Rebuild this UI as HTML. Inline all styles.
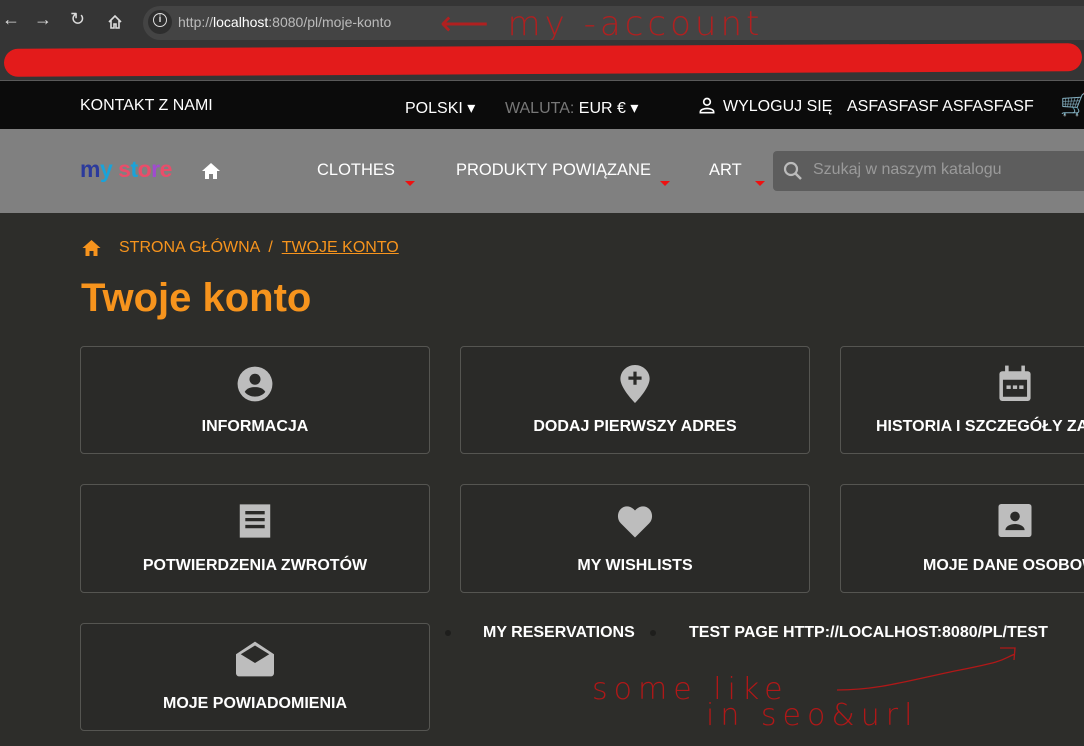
<!DOCTYPE html>
<html><head><meta charset="utf-8"><style>
*{margin:0;padding:0;box-sizing:border-box}
html,body{width:1084px;height:746px;overflow:hidden}
body{background:#2d2d2a;font-family:"Liberation Sans",sans-serif;position:relative}
.wrap{position:absolute;left:0;top:0;width:1084px;height:746px;overflow:hidden}
.abs{position:absolute}
.t{position:absolute;white-space:nowrap}
.card{position:absolute;width:350px;border:1px solid #555551;border-radius:4px;background:#2a2a28}
.card .lbl{position:absolute;left:0;right:0;text-align:center;color:#fff;font-weight:bold;font-size:16px;white-space:nowrap}
.card svg{position:absolute;left:50%;transform:translateX(-50%)}
.nav{color:#fff;font-size:16.5px}
.caret{position:absolute;width:0;height:0;border-left:5px solid transparent;border-right:5px solid transparent;border-top:5px solid #e11}
</style></head><body><div class="wrap">
<div class="abs" style="left:0;top:0;width:1084px;height:40px;background:#353535"></div>
<div class="abs" style="left:143px;top:6px;width:941px;height:34px;background:#444;border-radius:17px 0 0 17px"></div>
<div class="abs" style="left:148px;top:10px;width:24px;height:24px;border-radius:12px;background:#2e2e2e"></div>
<div class="t" style="left:153px;top:13px;width:14px;height:14px;border:1.5px solid #ddd;border-radius:7px;color:#ddd;font-size:10px;text-align:center;line-height:11px;font-weight:bold">i</div>
<div class="t" style="left:178px;top:14px;color:#bbb;font-size:14px">http://<span style="color:#fff">localhost</span>:8080/pl/moje-konto</div>
<div class="t" style="left:2px;top:9px;color:#ddd;font-size:18px">←</div>
<div class="t" style="left:34px;top:9px;color:#ddd;font-size:18px">→</div>
<div class="t" style="left:70px;top:9px;color:#ddd;font-size:18px">↻</div>
<svg class="abs" style="left:107px;top:14px" width="16" height="16" viewBox="0 0 16 16"><path d="M2 8L8 2l6 6M4 6v8h3v-4h2v4h3V6" fill="none" stroke="#ddd" stroke-width="1.6"/></svg>
<div class="t" style="left:440px;top:4px;color:#b02020;font-size:34px;font-family:'DejaVu Sans';font-weight:100;letter-spacing:4px">⟵ my -account</div>
<div class="abs" style="left:0;top:40px;width:1084px;height:40px;background:#353535"></div>
<div class="abs" style="left:4px;top:46px;width:1078px;height:28px;background:#e31b1b;border-radius:14px;transform:rotate(-0.3deg)"></div>
<div class="abs" style="left:0;top:80px;width:1084px;height:1px;background:#5a5a5a"></div>
<div class="abs" style="left:0;top:81px;width:1084px;height:48px;background:#0b0b0b"></div>
<div class="t nav" style="left:80px;top:97px;font-size:16px">KONTAKT Z NAMI</div>
<div class="t nav" style="left:405px;top:98px;font-size:16px">POLSKI ▾</div>
<div class="t" style="left:505px;top:98px;font-size:16px;color:#777">WALUTA: <span style="color:#fff">EUR € ▾</span></div>
<svg class="abs" style="left:697px;top:96px" width="20" height="20" viewBox="0 0 24 24"><circle cx="12" cy="7" r="4" fill="none" stroke="#fff" stroke-width="2"/><path d="M4 20v-1c0-3 5-4 8-4s8 1 8 4v1z" fill="none" stroke="#fff" stroke-width="2"/></svg>
<div class="t nav" style="left:723px;top:98px;font-size:16px">WYLOGUJ SIĘ</div>
<div class="t nav" style="left:847px;top:98px;font-size:16px">ASFASFASF ASFASFASF</div>
<div class="t" style="left:1060px;top:92px;color:#ccc;font-size:22px">🛒</div>
<div class="abs" style="left:0;top:129px;width:1084px;height:84px;background:#808080"></div>
<div class="t" style="left:80px;top:156px;font-size:23px;font-weight:bold;letter-spacing:-0.5px"><span style="color:#2b3a9c">m</span><span style="color:#1aa3d9">y</span> <span style="color:#e94d6a">s</span><span style="color:#1aa3d9">t</span><span style="color:#e94d6a">o</span><span style="color:#a04bd0">r</span><span style="color:#e94d6a">e</span></div>
<svg class="abs" style="left:201px;top:162px" width="20" height="18" viewBox="0 0 20 18"><path d="M10 1L1 9h3v8h4v-5h4v5h4V9h3z" fill="#fff"/></svg>
<div class="t nav" style="left:317px;top:161px">CLOTHES</div><div class="caret" style="left:405px;top:181px"></div>
<div class="t nav" style="left:456px;top:161px">PRODUKTY POWIĄZANE</div><div class="caret" style="left:660px;top:181px"></div>
<div class="t nav" style="left:709px;top:161px">ART</div><div class="caret" style="left:755px;top:181px"></div>
<div class="abs" style="left:773px;top:151px;width:311px;height:40px;background:#5d5d5d;border-radius:4px 0 0 4px"></div>
<svg class="abs" style="left:783px;top:161px" width="20" height="20" viewBox="0 0 20 20"><circle cx="8" cy="8" r="6" fill="none" stroke="#bbb" stroke-width="2.2"/><path d="M12.5 12.5L18 18" stroke="#bbb" stroke-width="2.5"/></svg>
<div class="t" style="left:813px;top:161px;color:#9a9a9a;font-size:16px">Szukaj w naszym katalogu</div>
<svg class="abs" style="left:81px;top:239px" width="21" height="18" viewBox="0 0 20 18"><path d="M10 1L1 9h3v8h4v-5h4v5h4V9h3z" fill="#f7941d"/></svg>
<div class="t" style="left:119px;top:239px;color:#f7941d;font-size:16px">STRONA GŁÓWNA &nbsp;/ &nbsp;<span style="text-decoration:underline">TWOJE KONTO</span></div>
<div class="t" style="left:81px;top:276px;color:#f7941d;font-size:40px;font-weight:bold">Twoje konto</div>
<div class="card" style="left:80px;top:346px;height:108px">
<svg style="top:18px" width="38" height="38" viewBox="0 0 24 24"><circle cx="12" cy="12" r="11" fill="#bdbdbd"/><circle cx="12" cy="9" r="3.5" fill="#2a2a28"/><path d="M5.5 17c1.5-2.5 4-3 6.5-3s5 .5 6.5 3c-1.5 2-4 3-6.5 3s-5-1-6.5-3z" fill="#2a2a28"/></svg>
<div class="lbl" style="top:71px">INFORMACJA</div></div>
<div class="card" style="left:460px;top:346px;height:108px">
<svg style="top:18px" width="30" height="38" viewBox="0 0 20 26"><path d="M10 0C4.5 0 0 4.3 0 9.5 0 16 10 26 10 26s10-10 10-16.5C20 4.3 15.5 0 10 0z" fill="#bdbdbd"/><path d="M10 4.5v9M5.5 9h9" stroke="#2a2a28" stroke-width="2.2"/></svg>
<div class="lbl" style="top:71px">DODAJ PIERWSZY ADRES</div></div>
<div class="card" style="left:840px;top:346px;height:108px">
<svg style="top:18px" width="34" height="38" viewBox="0 0 24 26"><rect x="1" y="4" width="22" height="21" rx="2" fill="#bdbdbd"/><rect x="5" y="0" width="2.5" height="5" fill="#bdbdbd"/><rect x="16.5" y="0" width="2.5" height="5" fill="#bdbdbd"/><rect x="3.5" y="10" width="17" height="12" fill="#2a2a28"/><rect x="6" y="14" width="3" height="2.5" fill="#bdbdbd"/><rect x="10.5" y="14" width="3" height="2.5" fill="#bdbdbd"/><rect x="15" y="14" width="3" height="2.5" fill="#bdbdbd"/></svg>
<div class="lbl" style="top:71px;left:35px;text-align:left">HISTORIA I SZCZEGÓŁY ZAMÓWIEŃ</div></div>
<div class="card" style="left:80px;top:484px;height:109px">
<svg style="top:18px" width="34" height="36" viewBox="0 0 24 26"><path d="M1 1h22v24H1z" fill="#bdbdbd"/><path d="M5 7h14M5 12h14M5 17h14" stroke="#2a2a28" stroke-width="2.4"/></svg>
<div class="lbl" style="top:72px">POTWIERDZENIA ZWROTÓW</div></div>
<div class="card" style="left:460px;top:484px;height:109px">
<svg style="top:19px" width="36" height="34" viewBox="0 0 24 22"><path d="M12 22L2.5 12.5C0 10 0 5.5 2.5 3S9 .5 12 4c3-3.5 7-3.5 9.5-1s2.5 7 0 9.5z" fill="#bdbdbd"/></svg>
<div class="lbl" style="top:72px">MY WISHLISTS</div></div>
<div class="card" style="left:840px;top:484px;height:109px">
<svg style="top:19px" width="33" height="33" viewBox="0 0 24 24"><rect x="0" y="0" width="24" height="24" rx="2" fill="#bdbdbd"/><circle cx="12" cy="9" r="3.5" fill="#2a2a28"/><path d="M5 19c0-3 4-4.5 7-4.5s7 1.5 7 4.5z" fill="#2a2a28"/></svg>
<div class="lbl" style="top:72px;left:82px;text-align:left">MOJE DANE OSOBOWE</div></div>
<div class="card" style="left:80px;top:623px;height:108px">
<svg style="top:17px" width="38" height="36" viewBox="0 0 24 22"><path d="M0 8L12 0l12 8v12a2 2 0 0 1-2 2H2a2 2 0 0 1-2-2z" fill="#bdbdbd"/><path d="M3 8l9-5.5L21 8l-9 5.5z" fill="#2a2a28"/></svg>
<div class="lbl" style="top:71px">MOJE POWIADOMIENIA</div></div>
<div class="abs" style="left:445px;top:630px;width:6px;height:6px;border-radius:3px;background:#1e1e1c"></div>
<div class="t" style="left:483px;top:624px;color:#fff;font-weight:bold;font-size:16px">MY RESERVATIONS</div>
<div class="abs" style="left:650px;top:630px;width:6px;height:6px;border-radius:3px;background:#1e1e1c"></div>
<div class="t" style="left:689px;top:624px;color:#fff;font-weight:bold;font-size:16px">TEST PAGE HTTP://LOCALHOST:8080/PL/TEST</div>
<svg class="abs" style="left:580px;top:640px" width="460" height="100" viewBox="0 0 460 100"><path d="M257 50C300 50 330 40 380 30S420 20 435 14M420 8h15l-1 12" fill="none" stroke="#b01818" stroke-width="1.3"/></svg>
<div class="t" style="left:592px;top:672px;color:#b01818;font-size:30px;font-family:'DejaVu Sans';font-weight:100;letter-spacing:6px">some like</div>
<div class="t" style="left:706px;top:698px;color:#b01818;font-size:30px;font-family:'DejaVu Sans';font-weight:100;letter-spacing:6px">in seo&amp;url</div>
</div></body></html>
